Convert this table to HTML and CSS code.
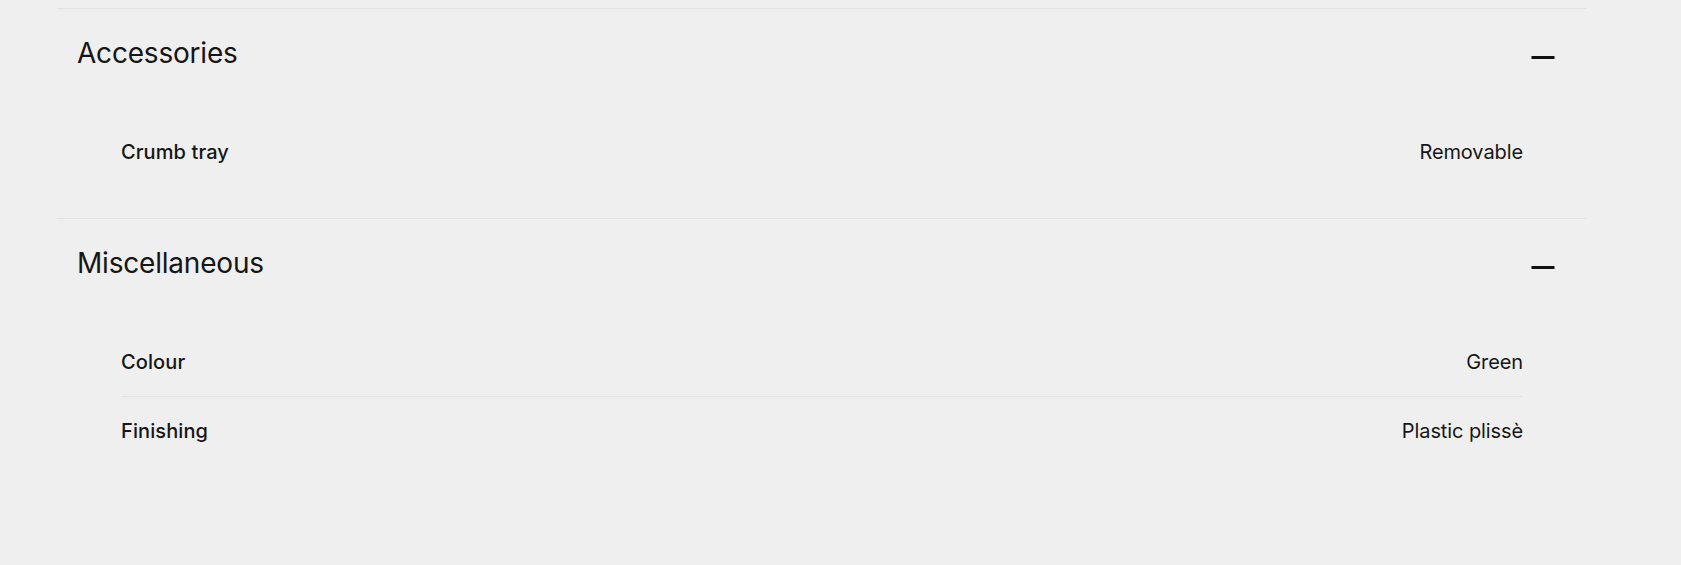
FILE: index.html
```html
<!DOCTYPE html>
<html>
<head>
    <title>Specifications</title>
    <link rel="stylesheet" href="styles.css">
</head>
<body>
    <div class="specs">
        <section class="spec-group">
            <div class="spec-header">
                <h3>Accessories</h3>
                <button class="toggle" aria-label="Collapse">
                    <svg width="24" height="24" viewBox="0 0 24 24"><rect x="0.5" y="14" width="23" height="3" fill="#111"/></svg>
                </button>
            </div>
            <ul class="spec-list">
                <li><span class="spec-name">Crumb tray</span><span class="spec-value">Removable</span></li>
            </ul>
        </section>

        <section class="spec-group">
            <div class="spec-header">
                <h3>Miscellaneous</h3>
                <button class="toggle" aria-label="Collapse">
                    <svg width="24" height="24" viewBox="0 0 24 24"><rect x="0.5" y="14" width="23" height="3" fill="#111"/></svg>
                </button>
            </div>
            <ul class="spec-list">
                <li><span class="spec-name">Colour</span><span class="spec-value">Green</span></li>
                <li><span class="spec-name">Finishing</span><span class="spec-value">Plastic plissè</span></li>
            </ul>
        </section>
    </div>
</body>
</html>
```

FILE: styles.css
```css
body {
    margin: 0;
    background-color: #efefef;
    color: #161616;
    font-family: Inter, "Liberation Sans", sans-serif;
}

.specs {
    padding: 8px 94px 0 57px;
}

.spec-group {
    border-top: 1px solid #e3e3e3;
    padding-bottom: 32px;
}

.spec-header {
    display: flex;
    justify-content: space-between;
    align-items: center;
    padding: 24px 32px 24px 20px;
}

.spec-header h3 {
    margin: 0;
    font-size: 28px;
    line-height: 41px;
    font-weight: 400;
    letter-spacing: -0.2px;
}

.toggle {
    display: flex;
    padding: 0;
    border: none;
    background: none;
    cursor: pointer;
}

.spec-list {
    list-style: none;
    margin: 20px 64px 0 64px;
    padding: 0;
}

.spec-list li {
    display: flex;
    justify-content: space-between;
    padding: 20px 0;
    font-size: 20px;
    line-height: 28px;
}

.spec-list li + li {
    border-top: 1px solid #e3e3e3;
}

.spec-name {
    font-weight: 500;
    letter-spacing: 0.1px;
}

.spec-value {
    letter-spacing: -0.1px;
}
```
